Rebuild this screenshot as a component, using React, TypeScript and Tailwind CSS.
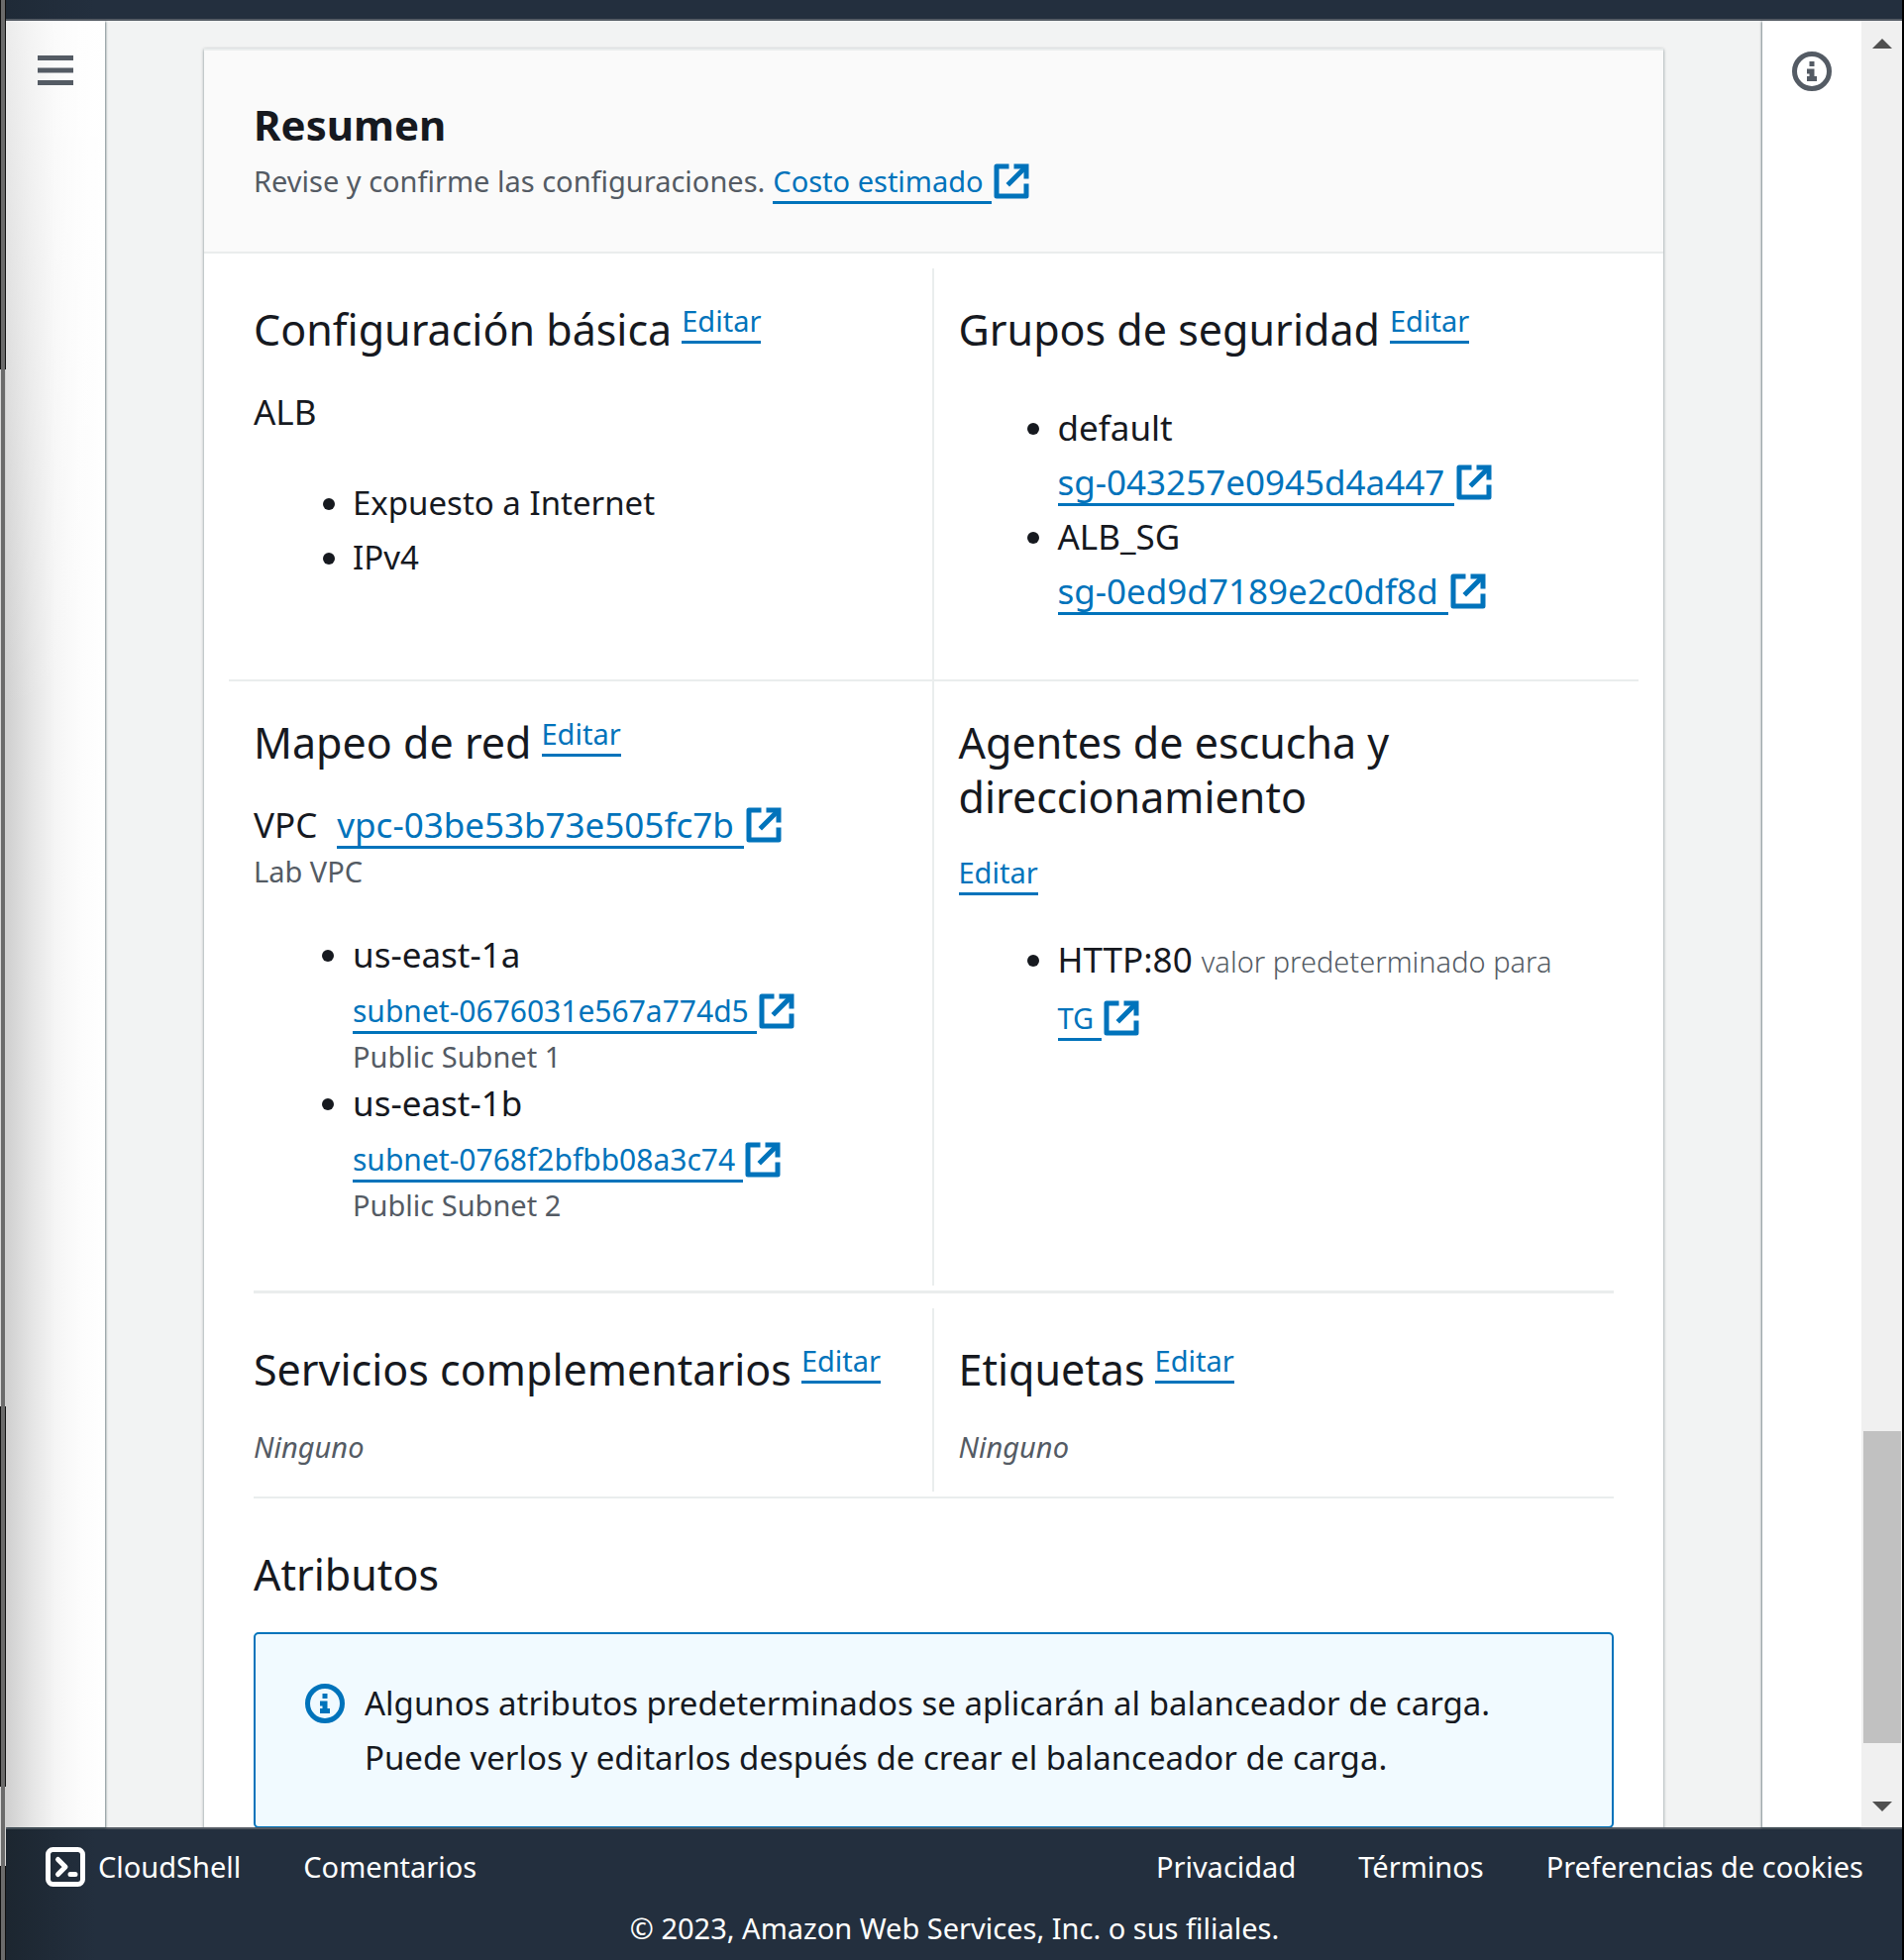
import React from "react";

function ExternalIcon() {
  return (
    <svg viewBox="0 0 16 16" className="inline-block size-10 shrink-0" fill="none" stroke="currentColor" strokeWidth="2" aria-hidden="true">
      <path d="M7 2H2v12h12V9" strokeLinejoin="round" />
      <path d="M9 2h5v5" />
      <path d="M14 2 6.500 9.500" />
    </svg>
  );
}

function InfoIcon() {
  return (
    <svg viewBox="0 0 16 16" className="size-10 shrink-0" aria-hidden="true">
      <circle cx="8" cy="8" r="7" fill="none" stroke="currentColor" strokeWidth="2" />
      <path fill="currentColor" d="M7 4h2v2H7zM6 7h3v3h1v2H6v-2h1V9H6z" />
    </svg>
  );
}

function ResourceLink({ children }: { children: React.ReactNode }) {
  return (
    <a href="#" className="inline-flex h-[55px] items-center align-top text-[35px] leading-[37px] text-[#0073bb]">
      <span className="border-b-3 border-[#0073bb] pt-[6px] pr-[10px] pb-[3px]">{children}</span>
      <ExternalIcon />
    </a>
  );
}

function ExternalLink({ children }: { children: React.ReactNode }) {
  return (
    <a href="#" className="inline-flex h-[57px] items-center pt-[2px] align-top leading-[37px] text-[#0073bb]">
      <span className="border-b-3 border-[#0073bb] pt-[5px] pr-2 pb-[2px]">{children}</span>
      <ExternalIcon />
    </a>
  );
}

function EditLink() {
  return (
    <a href="#" className="border-b-3 border-[#0073bb] pb-[2px] text-[29px] leading-[37px] text-[#0073bb]">
      Editar
    </a>
  );
}

function SectionTitle({ children }: { children: React.ReactNode }) {
  return (
    <div className="flex flex-wrap items-start gap-x-[10px]">
      <h3 className="text-[43px] leading-[55px]">{children}</h3>
      <EditLink />
    </div>
  );
}

function Subnet({ zone, id, name }: { zone: string; id: string; name: string }) {
  return (
    <li>
      {zone}
      <div className="flex text-[30px]">
        <ExternalLink>{id}</ExternalLink>
      </div>
      <p className="text-[29px] leading-[38px] text-[#545b64]">{name}</p>
    </li>
  );
}

export default function App() {
  return (
    <div className="flex h-screen overflow-hidden bg-[#232f3e] font-['Noto_Sans',sans-serif] text-[35px] leading-[55px] text-[#16191f]">
      <div className="flex w-[6px] shrink-0 flex-col bg-[#6b6b6b]">
        <div className="flex-[373] border-x border-[#111111]" />
        <div className="flex-[1047] border-x border-[#d8d8d8]" />
        <div className="flex-[384] border-x border-[#111111]" />
        <div className="flex-[80] border-x border-[#d8d8d8]" />
        <div className="flex-[95] border-x border-[#111111]" />
      </div>
      <div className="flex min-w-0 flex-1 flex-col">
        <header className="h-[21px] shrink-0 border-b-2 border-[#545b64] bg-[linear-gradient(to_right,#1f2a37_0px,#232f3e_90px)]" />
        <div className="flex min-h-0 flex-1 bg-[#f2f3f3]">
          <nav className="z-10 flex w-[100px] shrink-0 justify-center bg-[linear-gradient(to_bottom,rgba(255,255,255,0.6)_0px,rgba(255,255,255,0)_700px),linear-gradient(to_right,#cfcfcf_0px,#e4e4e4_25px,#f5f5f5_50px,#fcfcfc_75px,#ffffff_100px)] pt-[30px] shadow-[1px_1px_2px_rgba(0,28,36,0.5)]">
            <button aria-label="Abrir navegación" className="h-10 text-[#545b64]">
              <svg viewBox="0 0 40 40" className="size-10" stroke="currentColor" strokeWidth="5" aria-hidden="true">
                <path d="M2 7.500h36M2 20h36M2 32.500h36" />
              </svg>
            </button>
          </nav>
          <main className="min-w-0 flex-1 overflow-hidden px-[100px] pt-[28px]">
            <article className="border-t-2 border-[#eaeded] bg-white pb-[50px] shadow-[0_1px_3px_rgba(0,28,36,0.5)]">
              <header className="border-b-2 border-[#eaeded] bg-[#fafafa] px-[50px] pt-[47px] pb-[44px]">
                <h2 className="text-[42px] leading-[55px] font-bold">Resumen</h2>
                <p className="flex items-baseline text-[29px] leading-[55px] text-[#545b64]">
                  <span className="mr-2">Revise y confirme las configuraciones.</span>
                  <ExternalLink>Costo estimado</ExternalLink>
                </p>
              </header>

              <div className="grid grid-cols-2 px-[25px] pt-[15px]">
                <section className="border-r-2 border-b-2 border-[#eaeded] px-[25px] pt-[34px] pb-[62px]">
                  <SectionTitle>Configuración básica</SectionTitle>
                  <p className="mt-[28px]">ALB</p>
                  <ul className="mt-[37px] list-disc pl-[100px] text-[33px]">
                    <li>Expuesto a Internet</li>
                    <li>IPv4</li>
                  </ul>
                </section>
                <section className="border-b-2 border-[#eaeded] px-[25px] pt-[34px] pb-[62px]">
                  <SectionTitle>Grupos de seguridad</SectionTitle>
                  <ul className="mt-[44px] list-disc pl-[100px]">
                    <li>
                      default
                      <br />
                      <ResourceLink>sg-043257e0945d4a447</ResourceLink>
                    </li>
                    <li>
                      ALB_SG
                      <br />
                      <ResourceLink>sg-0ed9d7189e2c0df8d</ResourceLink>
                    </li>
                  </ul>
                </section>
                <section className="border-r-2 border-[#eaeded] px-[25px] pt-[34px] pb-[62px]">
                  <SectionTitle>Mapeo de red</SectionTitle>
                  <p className="mt-[28px] flex gap-5">
                    VPC <ResourceLink>vpc-03be53b73e505fc7b</ResourceLink>
                  </p>
                  <p className="text-[29px] leading-[40px] text-[#545b64]">Lab VPC</p>
                  <ul className="mt-[36px] list-disc pl-[100px]">
                    <Subnet zone="us-east-1a" id="subnet-0676031e567a774d5" name="Public Subnet 1" />
                    <Subnet zone="us-east-1b" id="subnet-0768f2bfbb08a3c74" name="Public Subnet 2" />
                  </ul>
                </section>
                <section className="px-[25px] pt-[34px]">
                  <div className="flex flex-wrap items-start gap-y-[30px]">
                    <h3 className="text-[43px] leading-[55px]">Agentes de escucha y direccionamiento</h3>
                    <EditLink />
                  </div>
                  <ul className="mt-[37px] list-disc pl-[100px]">
                    <li>
                      HTTP:80{" "}
                      <span className="text-[29px]">
                        <span className="font-light text-[#545b64]">valor predeterminado para</span>{" "}
                        <ExternalLink>TG</ExternalLink>
                      </span>
                    </li>
                  </ul>
                </section>
              </div>

              <hr className="mx-[50px] mt-[5px] border-t-3 border-[#eaeded]" />
              <div className="mt-[15px] grid grid-cols-2 px-[25px]">
                <section className="border-r-2 border-[#eaeded] px-[25px] pt-[34px] pb-[18px]">
                  <SectionTitle>Servicios complementarios</SectionTitle>
                  <p className="mt-[23px] text-[29px] text-[#545b64] italic">Ninguno</p>
                </section>
                <section className="px-[25px] pt-[34px] pb-[18px]">
                  <SectionTitle>Etiquetas</SectionTitle>
                  <p className="mt-[23px] text-[29px] text-[#545b64] italic">Ninguno</p>
                </section>
              </div>
              <hr className="mx-[50px] mt-[5px] border-t-2 border-[#eaeded]" />

              <section className="px-[50px] pt-[49px]">
                <h3 className="text-[43px] leading-[55px]">Atributos</h3>
                <div role="status" className="mt-[31px] flex gap-5 rounded-[5px] border-2 border-[#0073bb] bg-[#f1faff] py-[42px] pl-[50px]">
                  <div className="flex h-[55px] items-center text-[#0073bb]">
                    <InfoIcon />
                  </div>
                  <p className="text-[33px]">
                    Algunos atributos predeterminados se aplicarán al balanceador de carga.
                    <br />
                    Puede verlos y editarlos después de crear el balanceador de carga.
                  </p>
                </div>
              </section>
            </article>
          </main>
          <aside className="z-10 flex w-[100px] shrink-0 justify-center bg-white pt-[31px] shadow-[-1px_1px_2px_rgba(0,28,36,0.5)]">
            <button aria-label="Información" className="h-10 text-[#545b64]">
              <InfoIcon />
            </button>
          </aside>
          <div className="z-20 flex w-[41px] shrink-0 flex-col items-center bg-[#f0f0f0] pt-[18px] pb-[16px]">
            <svg viewBox="0 0 20 10" className="h-[10px] w-[20px]" fill="#505050" aria-hidden="true">
              <path d="M10 0 20 10H0z" />
            </svg>
            <div className="flex-[1396]" />
            <div className="w-[38px] flex-[315] bg-[#c1c1c1]" />
            <div className="flex-[59]" />
            <svg viewBox="0 0 20 10" className="h-[10px] w-[20px]" fill="#505050" aria-hidden="true">
              <path d="M0 0h20L10 10z" />
            </svg>
          </div>
        </div>
        <footer className="shrink-0 border-t-2 border-[#545b64] bg-[linear-gradient(to_right,#1c2630_0px,#232f3e_90px)] pr-[39px] pl-[40px] text-[29px] text-white">
          <div className="flex h-[75px] items-center">
            <button className="flex items-center gap-[13px]">
              <svg viewBox="0 0 16 16" className="size-10" fill="none" stroke="currentColor" strokeWidth="2" strokeLinecap="round" strokeLinejoin="round" aria-hidden="true">
                <rect x="1" y="1" width="14" height="14" rx="2" />
                <path d="m5 5 3 3-3 3M10 11h2" />
              </svg>
              CloudShell
            </button>
            <a href="#" className="ml-[63px]">Comentarios</a>
            <div className="ml-auto flex gap-[63px]">
              <a href="#">Privacidad</a>
              <a href="#">Términos</a>
              <a href="#">Preferencias de cookies</a>
            </div>
          </div>
          <p className="pb-[7px] text-center leading-[50px]">© 2023, Amazon Web Services, Inc. o sus filiales.</p>
        </footer>
      </div>
      <div className="w-[2px] shrink-0 bg-black" />
    </div>
  );
}
